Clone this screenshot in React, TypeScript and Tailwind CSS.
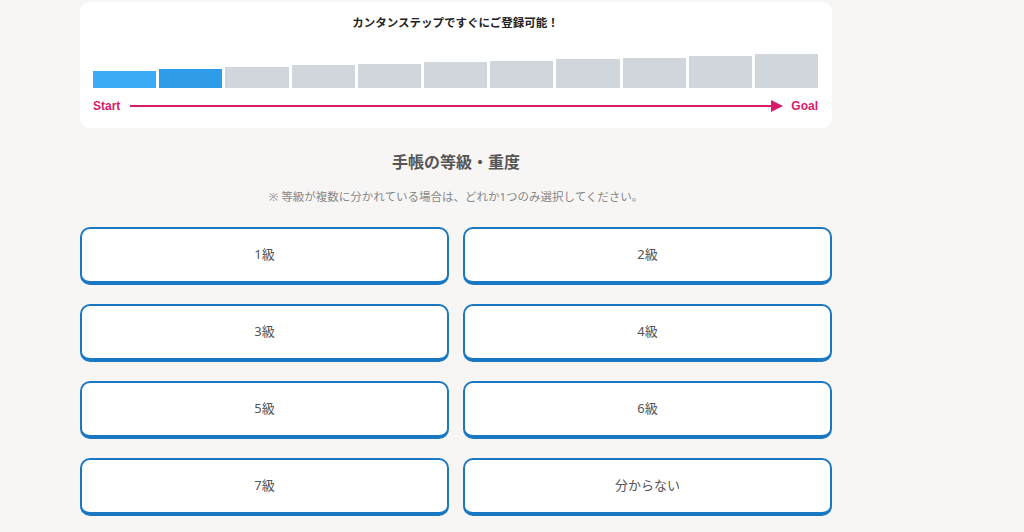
const bars = [17, 19, 21, 23, 24, 26, 27, 29, 30, 32, 34];

const grades = ["1級", "2級", "3級", "4級", "5級", "6級", "7級", "分からない"];

export default function App() {
  return (
    <div
      className="min-h-screen w-full bg-[#f7f6f5]"
      style={{ fontFamily: '"Noto Sans", "Noto Sans CJK JP", sans-serif' }}
    >
      <div className="ml-[80px] w-[752px] pt-[2px]">
        <div className="h-[126px] rounded-[10px] bg-white pl-[13px] pr-[14px] pt-[12px]">
          <p className="text-center text-[11.5px] font-bold leading-[18px] text-[#222]">
            カンタンステップですぐにご登録可能！
          </p>
          <div className="mt-[22px] flex h-[34px] items-end gap-[3px]">
            {bars.map((h, i) => (
              <div
                key={i}
                className={
                  i === 0 ? "flex-1 bg-[#3babf7]" : i === 1 ? "flex-1 bg-[#2f9cea]" : "flex-1 bg-[#d1d6dc]"
                }
                style={{ height: h }}
              />
            ))}
          </div>
          <div
            className="mt-[9px] flex items-center text-[12px] font-bold text-[#d81b6a]"
            style={{ fontFamily: '"Liberation Sans", Arial, sans-serif' }}
          >
            <span className="leading-[18px]">Start</span>
            <div className="ml-[10px] mr-[8px] flex flex-1 items-center">
              <div className="h-[2px] flex-1 bg-[#d81b6a]" />
              <svg width="12" height="12" viewBox="0 0 12 12" className="-ml-px">
                <path d="M0 0 L12 6 L0 12 Z" fill="#d81b6a" />
              </svg>
            </div>
            <span className="leading-[18px]">Goal</span>
          </div>
        </div>

        <h2 className="mt-[23px] text-center text-[16px] font-bold leading-[22px] text-[#555]">
          手帳の等級・重度
        </h2>
        <p className="mt-[16px] text-center text-[11.5px] leading-[16px] text-[#888]">
          ※ 等級が複数に分かれている場合は、どれか1つのみ選択してください。
        </p>

        <div className="mt-[22px] grid grid-cols-2 gap-x-[14px] gap-y-[19px]">
          {grades.map((g) => (
            <button
              key={g}
              className="flex h-[58px] items-center justify-center rounded-[10px] border-2 border-b-4 border-[#1a78c2] bg-white text-[13px] text-[#555]"
            >
              {g}
            </button>
          ))}
        </div>
      </div>
    </div>
  );
}
